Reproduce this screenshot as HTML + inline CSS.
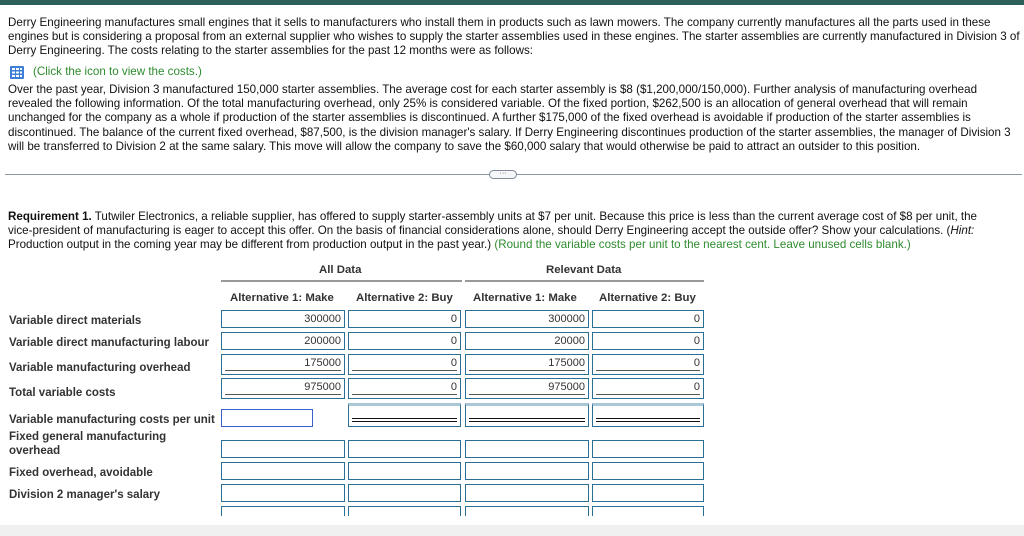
<!DOCTYPE html>
<html><head><style>
body{margin:0;width:1024px;height:536px;overflow:hidden;background:#fff;font-family:"Liberation Sans",Arial,sans-serif;color:#111;position:relative}
.t{position:absolute;left:8px;font-size:11.6px;white-space:nowrap;line-height:14px}
.g{color:#2e8b2e}
.lab{position:absolute;left:9px;font-size:11.5px;font-weight:bold;color:#333;line-height:14px}
.h{position:absolute;font-size:11.4px;font-weight:bold;color:#333;white-space:nowrap}
.b{position:absolute;box-sizing:border-box;border:1px solid #2b6f96;background:#fff;font-size:11px;color:#333;text-align:right;padding-right:3px;line-height:16px}
.u:after{content:"";position:absolute;left:3px;right:3px;bottom:3px;border-top:1px solid #555}
.d:after{content:"";position:absolute;left:3px;right:3px;bottom:4px;height:2px;border-top:1px solid #111;border-bottom:1px solid #111}
.d{border-top:3px solid #a9c7d6}
</style></head><body>
<div style="position:absolute;left:0;top:0;width:1024px;height:5px;background:#2b5f58"></div>
<div class="t" style="top:16px">Derry Engineering manufactures small engines that it sells to manufacturers who install them in products such as lawn mowers. The company currently manufactures all the parts used in these</div>
<div class="t" style="top:30px">engines but is considering a proposal from an external supplier who wishes to supply the starter assemblies used in these engines. The starter assemblies are currently manufactured in Division 3 of</div>
<div class="t" style="top:44px">Derry Engineering. The costs relating to the starter assemblies for the past 12 months were as follows:</div>
<svg style="position:absolute;left:10px;top:66px" width="14" height="13"><rect x="0" y="0" width="14" height="13" rx="1" fill="#3d7fd6"/><g fill="#fff"><rect x="2" y="2" width="3" height="2"/><rect x="6" y="2" width="3" height="2"/><rect x="10" y="2" width="2" height="2"/><rect x="2" y="5.5" width="3" height="2"/><rect x="6" y="5.5" width="3" height="2"/><rect x="10" y="5.5" width="2" height="2"/><rect x="2" y="9" width="3" height="2"/><rect x="6" y="9" width="3" height="2"/><rect x="10" y="9" width="2" height="2"/></g></svg>
<div class="t g" style="top:65px;left:33px">(Click the icon to view the costs.)</div>
<div class="t" style="top:83px">Over the past year, Division 3 manufactured 150,000 starter assemblies. The average cost for each starter assembly is $8 ($1,200,000/150,000). Further analysis of manufacturing overhead</div>
<div class="t" style="top:97px">revealed the following information. Of the total manufacturing overhead, only 25% is considered variable. Of the fixed portion, $262,500 is an allocation of general overhead that will remain</div>
<div class="t" style="top:111px">unchanged for the company as a whole if production of the starter assemblies is discontinued. A further $175,000 of the fixed overhead is avoidable if production of the starter assemblies is</div>
<div class="t" style="top:126px">discontinued. The balance of the current fixed overhead, $87,500, is the division manager's salary. If Derry Engineering discontinues production of the starter assemblies, the manager of Division 3</div>
<div class="t" style="top:140px">will be transferred to Division 2 at the same salary. This move will allow the company to save the $60,000 salary that would otherwise be paid to attract an outsider to this position.</div>
<div style="position:absolute;left:5px;right:2px;top:174px;border-top:1px solid #8a96a3"></div>
<div style="position:absolute;left:489px;top:170px;width:26px;height:7px;border:1px solid #7d8a97;border-radius:5px;background:#f4f6f8;font-size:7px;line-height:5px;text-align:center;color:#444">···</div>
<div class="t" style="top:210px"><b>Requirement 1.</b> Tutwiler Electronics, a reliable supplier, has offered to supply starter-assembly units at $7 per unit. Because this price is less than the current average cost of $8 per unit, the</div>
<div class="t" style="top:224px">vice-president of manufacturing is eager to accept this offer. On the basis of financial considerations alone, should Derry Engineering accept the outside offer? Show your calculations. (<i>Hint:</i></div>
<div class="t" style="top:238px">Production output in the coming year may be different from production output in the past year.) <span class="g">(Round the variable costs per unit to the nearest cent. Leave unused cells blank.)</span></div>
<div class="h" style="left:319px;top:264px">All Data</div>
<div class="h" style="left:546px;top:264px">Relevant Data</div>
<div style="position:absolute;left:221px;top:280px;width:241px;border-top:2px solid #999"></div>
<div style="position:absolute;left:465px;top:280px;width:239px;border-top:2px solid #999"></div>
<div class="h" style="left:230px;top:292px">Alternative 1: Make</div>
<div class="h" style="left:356px;top:292px">Alternative 2: Buy</div>
<div class="h" style="left:473px;top:292px">Alternative 1: Make</div>
<div class="h" style="left:599px;top:292px">Alternative 2: Buy</div>
<div class="lab" style="top:314px">Variable direct materials</div>
<div class="lab" style="top:336px">Variable direct manufacturing labour</div>
<div class="lab" style="top:361px">Variable manufacturing overhead</div>
<div class="lab" style="top:386px">Total variable costs</div>
<div class="lab" style="top:413px">Variable manufacturing costs per unit</div>
<div class="lab" style="top:430px">Fixed general manufacturing<br>overhead</div>
<div class="lab" style="top:466px">Fixed overhead, avoidable</div>
<div class="lab" style="top:488px">Division 2 manager's salary</div>

<div class="b" style="left:221px;top:310px;width:124px;height:18px">300000</div>
<div class="b" style="left:348px;top:310px;width:113px;height:18px">0</div>
<div class="b" style="left:465px;top:310px;width:124px;height:18px">300000</div>
<div class="b" style="left:592px;top:310px;width:112px;height:18px">0</div>
<div class="b" style="left:221px;top:332px;width:124px;height:18px">200000</div>
<div class="b" style="left:348px;top:332px;width:113px;height:18px">0</div>
<div class="b" style="left:465px;top:332px;width:124px;height:18px">20000</div>
<div class="b" style="left:592px;top:332px;width:112px;height:18px">0</div>
<div class="b u" style="left:221px;top:354px;width:124px;height:21px">175000</div>
<div class="b u" style="left:348px;top:354px;width:113px;height:21px">0</div>
<div class="b u" style="left:465px;top:354px;width:124px;height:21px">175000</div>
<div class="b u" style="left:592px;top:354px;width:112px;height:21px">0</div>
<div class="b u" style="left:221px;top:378px;width:124px;height:21px">975000</div>
<div class="b u" style="left:348px;top:378px;width:113px;height:21px">0</div>
<div class="b u" style="left:465px;top:378px;width:124px;height:21px">975000</div>
<div class="b u" style="left:592px;top:378px;width:112px;height:21px">0</div>
<div class="b" style="left:221px;top:409px;width:92px;height:18px;border-color:#3a5fc8"></div>
<div class="b d" style="left:348px;top:403px;width:113px;height:24px"></div>
<div class="b d" style="left:465px;top:403px;width:124px;height:24px"></div>
<div class="b d" style="left:592px;top:403px;width:112px;height:24px"></div>
<div class="b" style="left:221px;top:440px;width:124px;height:18px"></div>
<div class="b" style="left:348px;top:440px;width:113px;height:18px"></div>
<div class="b" style="left:465px;top:440px;width:124px;height:18px"></div>
<div class="b" style="left:592px;top:440px;width:112px;height:18px"></div>
<div class="b" style="left:221px;top:462px;width:124px;height:18px"></div>
<div class="b" style="left:348px;top:462px;width:113px;height:18px"></div>
<div class="b" style="left:465px;top:462px;width:124px;height:18px"></div>
<div class="b" style="left:592px;top:462px;width:112px;height:18px"></div>
<div class="b" style="left:221px;top:484px;width:124px;height:18px"></div>
<div class="b" style="left:348px;top:484px;width:113px;height:18px"></div>
<div class="b" style="left:465px;top:484px;width:124px;height:18px"></div>
<div class="b" style="left:592px;top:484px;width:112px;height:18px"></div>
<div class="b" style="left:221px;top:506px;width:124px;height:10px;border-bottom:none"></div>
<div class="b" style="left:348px;top:506px;width:113px;height:10px;border-bottom:none"></div>
<div class="b" style="left:465px;top:506px;width:124px;height:10px;border-bottom:none"></div>
<div class="b" style="left:592px;top:506px;width:112px;height:10px;border-bottom:none"></div>
<div style="position:absolute;left:0;top:525px;width:1024px;height:11px;background:#f0f0f0"></div>
</body></html>
